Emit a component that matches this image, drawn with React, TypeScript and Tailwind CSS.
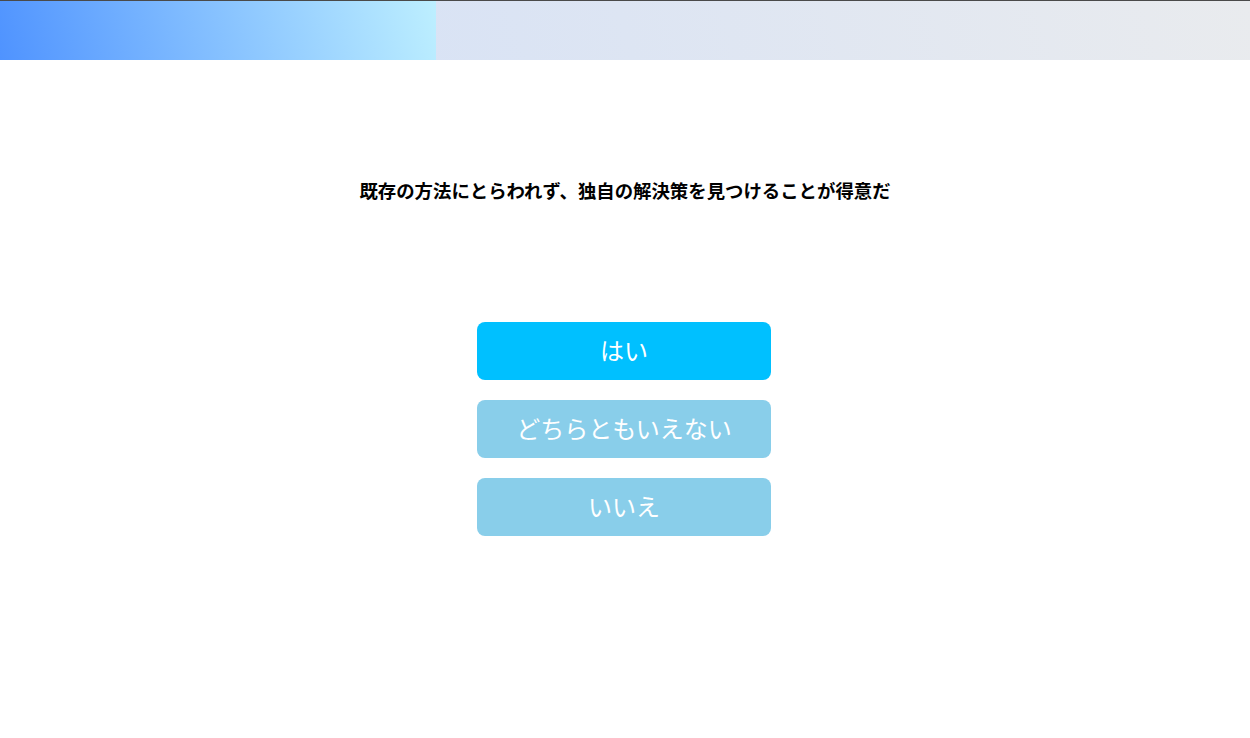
const choices = [
  { label: "はい", active: true },
  { label: "どちらともいえない", active: false },
  { label: "いいえ", active: false },
];

export default function App() {
  return (
    <div className="min-h-[738px] bg-white font-['Noto_Sans_CJK_JP','Noto_Sans',sans-serif]">
      {/* progress header */}
      <div className="flex h-[60px] border-t border-[#4a4a4a] bg-[linear-gradient(75deg,#d1dff8,#e9ebee)]">
        <div className="h-full w-[436px] bg-[linear-gradient(75deg,#4f93ff,#bdefff)]" />
      </div>

      <div className="flex flex-col items-center">
        <h1 className="mt-[117px] text-[18.4px] font-bold leading-[26px] text-black">
          既存の方法にとらわれず、独自の解決策を見つけることが得意だ
        </h1>

        <div className="-ml-[2px] mt-[119px] flex flex-col gap-[20px]">
          {choices.map((c) => (
            <button
              key={c.label}
              type="button"
              className={`flex h-[58px] w-[294px] items-center justify-center rounded-[8px] pb-[3px] text-[24px] text-white ${
                c.active ? "bg-[#00c0ff]" : "bg-[#89ceea]"
              }`}
            >
              {c.label}
            </button>
          ))}
        </div>
      </div>
    </div>
  );
}
